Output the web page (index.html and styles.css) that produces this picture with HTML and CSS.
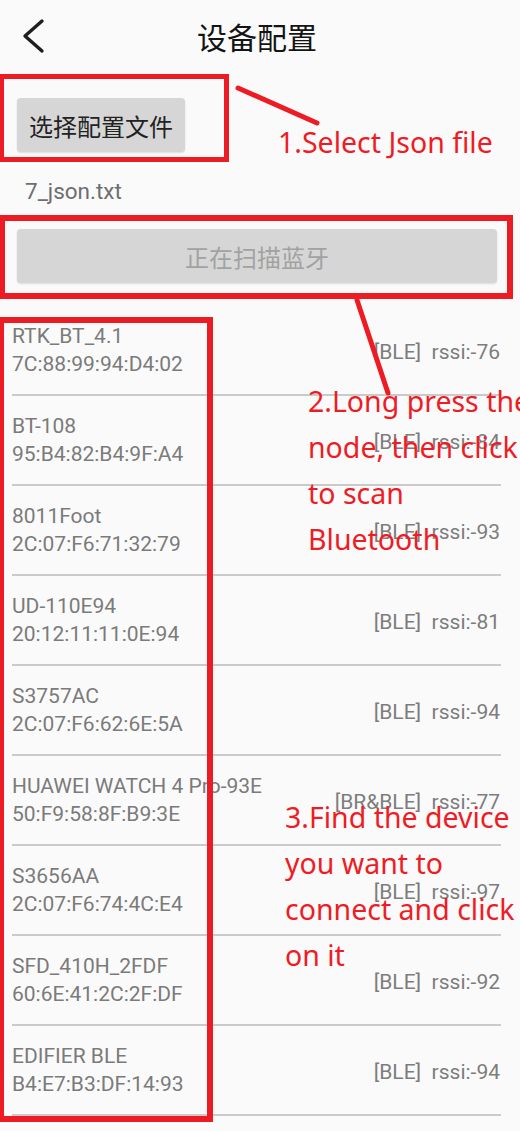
FILE: index.html
```html
<!DOCTYPE html>
<html lang="zh-CN">
<head>
<meta charset="utf-8">
<title>设备配置</title>
<link rel="stylesheet" href="styles.css">
</head>
<body>
<div class="page">
  <header class="topbar">
    <svg class="back" width="24" height="36" viewBox="0 0 24 36"><polyline points="20,3 3,18 20,33" fill="none" stroke="#1e1e1e" stroke-width="3.4" stroke-linecap="round" stroke-linejoin="round"/></svg>
    <h1 class="title">设备配置</h1>
    <span></span>
  </header>
  <main class="content">
    <div class="btn btn-file">选择配置文件</div>
    <div class="filename">7_json.txt</div>
    <div class="btn btn-scan">正在扫描蓝牙</div>
    <ul class="devices">
      <li class="row"><div class="info"><div>RTK_BT_4.1</div><div>7C:88:99:94:D4:02</div></div><div class="meta">[BLE]  rssi:-76</div></li>
      <li class="row"><div class="info"><div>BT-108</div><div>95:B4:82:B4:9F:A4</div></div><div class="meta">[BLE]  rssi:-84</div></li>
      <li class="row"><div class="info"><div>8011Foot</div><div>2C:07:F6:71:32:79</div></div><div class="meta">[BLE]  rssi:-93</div></li>
      <li class="row"><div class="info"><div>UD-110E94</div><div>20:12:11:11:0E:94</div></div><div class="meta">[BLE]  rssi:-81</div></li>
      <li class="row"><div class="info"><div>S3757AC</div><div>2C:07:F6:62:6E:5A</div></div><div class="meta">[BLE]  rssi:-94</div></li>
      <li class="row"><div class="info"><div>HUAWEI WATCH 4 Pro-93E</div><div>50:F9:58:8F:B9:3E</div></div><div class="meta">[BR&amp;BLE]  rssi:-77</div></li>
      <li class="row"><div class="info"><div>S3656AA</div><div>2C:07:F6:74:4C:E4</div></div><div class="meta">[BLE]  rssi:-97</div></li>
      <li class="row"><div class="info"><div>SFD_410H_2FDF</div><div>60:6E:41:2C:2F:DF</div></div><div class="meta">[BLE]  rssi:-92</div></li>
      <li class="row"><div class="info"><div>EDIFIER BLE</div><div>B4:E7:B3:DF:14:93</div></div><div class="meta">[BLE]  rssi:-94</div></li>
    </ul>
  </main>

  <div class="mark mark-1"></div>
  <div class="mark mark-2"></div>
  <div class="mark mark-3"></div>
  <svg class="arrows" width="520" height="1131" viewBox="0 0 520 1131">
    <line x1="238" y1="88" x2="317" y2="123" stroke="#ed1c24" stroke-width="5" stroke-linecap="round"/>
    <line x1="357" y1="300" x2="388" y2="393" stroke="#ed1c24" stroke-width="5" stroke-linecap="round"/>
  </svg>
  <div class="note note-1">1.Select Json file</div>
  <div class="note note-2">2.Long press the<br>node, then click<br>to scan<br>Bluetooth</div>
  <div class="note note-3">3.Find the device<br>you want to<br>connect and click<br>on it</div>
</div>
</body>
</html>
```

FILE: styles.css
```css
* { box-sizing: border-box; }
html, body { margin: 0; padding: 0; }
body {
  background: #fafafa;
  font-family: Roboto, "Noto Sans CJK SC", sans-serif;
  overflow: hidden;
}
.page {
  position: relative;
  width: 520px;
  height: 1131px;
  overflow: hidden;
}
.topbar {
  height: 72px;
  display: grid;
  grid-template-columns: 1fr auto 1fr;
  align-items: center;
  padding: 0 28px 0 22px;
}
.back { display: block; }
.title {
  margin: 0;
  font-family: "Noto Sans CJK SC", sans-serif;
  font-weight: 400;
  font-size: 30px;
  line-height: 40px;
  color: #141414;
}
.content {
  display: flex;
  flex-direction: column;
  align-items: flex-start;
  padding: 26px 0 0 0;
}
.btn {
  display: flex;
  align-items: center;
  justify-content: center;
  height: 54px;
  background: #d6d6d6;
  border-radius: 4px;
  box-shadow: 0 1px 2px rgba(0,0,0,0.12);
  font-family: "Noto Sans CJK SC", sans-serif;
  font-size: 24px;
}
.btn-file {
  margin-left: 17px;
  width: 168px;
  color: #222;
}
.filename {
  margin: 25px 0 0 25px;
  font-size: 22.5px;
  line-height: 28px;
  color: #6e6e6e;
}
.btn-scan {
  margin: 24px 0 0 17px;
  width: 480px;
  color: #a2a2a2;
}
.devices {
  list-style: none;
  margin: 23px 0 0 12px;
  padding: 0;
  width: 489px;
}
.row {
  display: flex;
  justify-content: space-between;
  align-items: center;
  padding: 16px 1px 16px 0;
  border-bottom: 2px solid #cacaca;
  font-size: 21px;
  line-height: 28px;
  color: #7b7b7b;
}
.info { white-space: nowrap; }
.meta { white-space: pre; color: #7d7d7d; padding-top: 4px; }

.mark {
  position: absolute;
  border: 6px solid #ed1c24;
}
.mark-1 { left: -1px; top: 74px; width: 230px; height: 88px; border-width: 5px; }
.mark-2 { left: -1px; top: 215px; width: 514px; height: 84px; }
.mark-3 { left: -2px; top: 317px; width: 215px; height: 805px; }
.arrows { position: absolute; left: 0; top: 0; }
.note {
  position: absolute;
  font-family: "Noto Sans", "Open Sans", sans-serif;
  font-size: 28.5px;
  line-height: 46px;
  color: #ee1c25;
  white-space: nowrap;
}
.note-1 { left: 278px; top: 119px; }
.note-2 { left: 308px; top: 378px; }
.note-3 { left: 285px; top: 794px; }
```
